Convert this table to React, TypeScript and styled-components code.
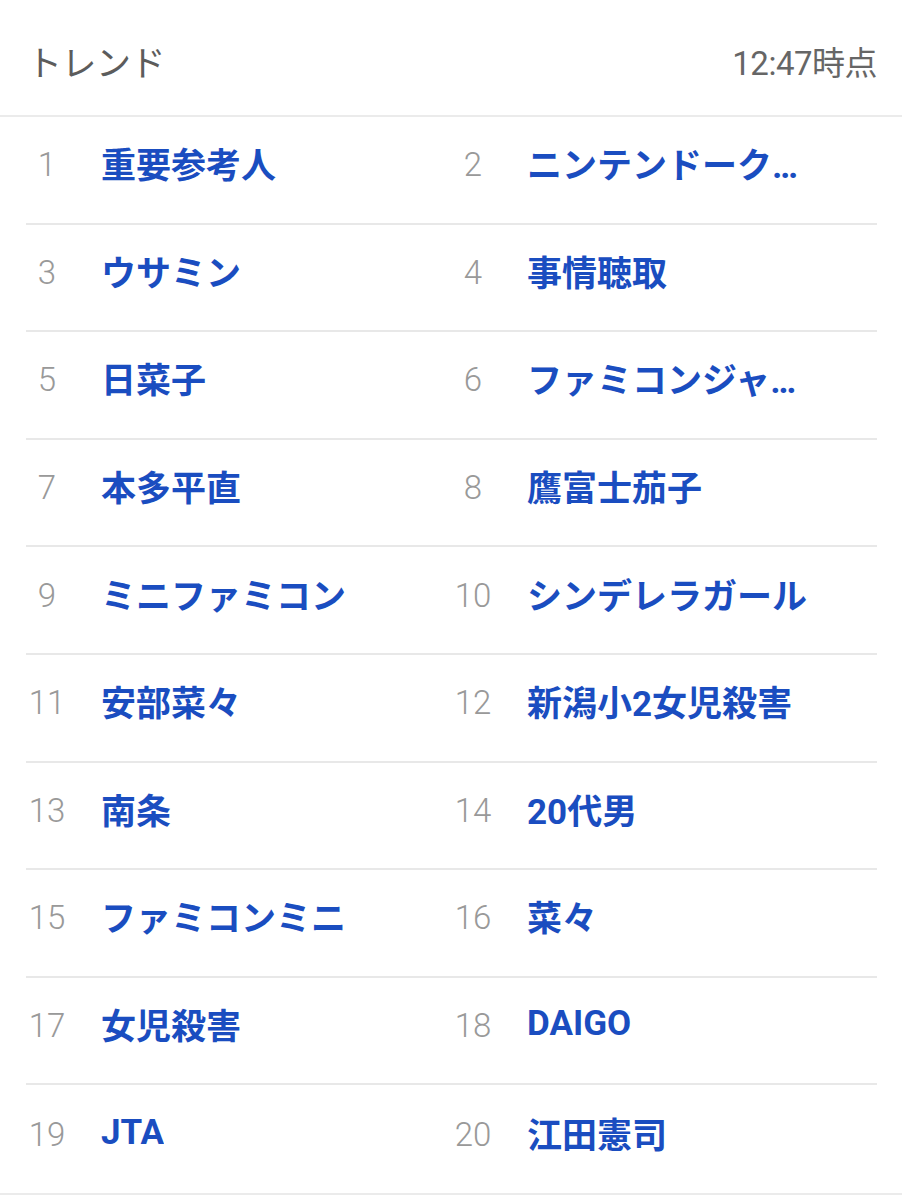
import styled, { createGlobalStyle } from 'styled-components';

const trends = [
	'重要参考人',
	'ニンテンドークラシックミニ',
	'ウサミン',
	'事情聴取',
	'日菜子',
	'ファミコンジャンプ',
	'本多平直',
	'鷹富士茄子',
	'ミニファミコン',
	'シンデレラガール',
	'安部菜々',
	'新潟小2女児殺害',
	'南条',
	'20代男',
	'ファミコンミニ',
	'菜々',
	'女児殺害',
	'DAIGO',
	'JTA',
	'江田憲司',
];

const GlobalStyle = createGlobalStyle`
	body {
		margin: 0;
		background: #ffffff;
		font-family: Roboto, "Noto Sans CJK JP", sans-serif;
	}
`;

function App() {
	return (
		<Page>
			<GlobalStyle />
			<Header>
				<Title>トレンド</Title>
				<Time>12:47時点</Time>
			</Header>
			<List>
				{trends.map((word, i) => (
					<Item key={word} $last={i >= trends.length - 2}>
						<Rank>{i + 1}</Rank>
						<Word title={word}>{word}</Word>
					</Item>
				))}
			</List>
		</Page>
	);
}

export default App;

const Page = styled.div`
	width: 902px;
	background: #fff;
	border-bottom: 2px solid #ebebeb;
`;

const Header = styled.header`
	display: flex;
	align-items: center;
	justify-content: space-between;
	box-sizing: border-box;
	height: 117px;
	padding: 6px 25px 0 27px;
	border-bottom: 2px solid #ebebeb;
`;

const Title = styled.h1`
	margin: 0;
	font-family: "Noto Sans CJK JP", sans-serif;
	font-size: 35px;
	font-weight: 400;
	color: #5c5c5c;
	letter-spacing: -0.5px;
`;

const Time = styled.span`
	font-family: Roboto, "Noto Sans CJK JP", sans-serif;
	font-size: 33px;
	font-weight: 400;
	color: #666666;
	letter-spacing: -0.5px;
`;

const List = styled.ol`
	display: grid;
	grid-template-columns: 426px 425px;
	margin: 0 25px 0 26px;
	padding: 0;
	list-style: none;
`;

const Item = styled.li<{ $last: boolean }>`
	display: flex;
	align-items: center;
	box-sizing: border-box;
	height: 107.6px;
	padding-bottom: 14px;
	border-bottom: ${({ $last }) => ($last ? 'none' : '2px solid #e8e8e8')};
`;

const Rank = styled.span`
	flex: 0 0 42px;
	padding-top: 4px;
	text-align: center;
	font-family: Roboto, sans-serif;
	font-size: 33px;
	font-weight: 300;
	color: #999999;
`;

const Word = styled.span`
	margin-left: 33px;
	max-width: 286px;
	overflow: hidden;
	white-space: nowrap;
	text-overflow: ellipsis;
	font-family: Roboto, "Noto Sans CJK JP", sans-serif;
	font-size: 35px;
	font-weight: 700;
	color: #1a4dc0;
`;
